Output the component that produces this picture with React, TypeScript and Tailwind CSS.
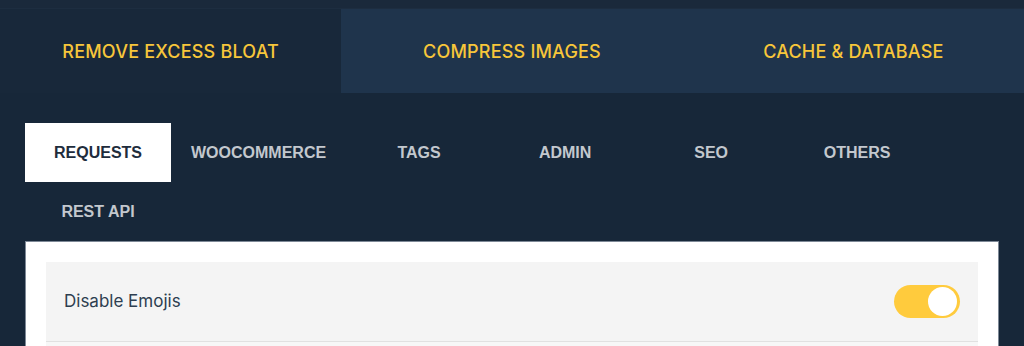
import { useState } from "react";

const mainTabs = ["Remove Excess Bloat", "Compress Images", "Cache & Database"];
const subTabs = ["Requests", "WooCommerce", "Tags", "Admin", "SEO", "Others", "REST API"];

export default function App()
{
    const [mainTab, setMainTab] = useState<number>(0);
    const [subTab, setSubTab] = useState<number>(0);
    const [emojis, setEmojis] = useState<boolean>(true);

    return (
        <div className="w-[1024px] h-[346px] overflow-hidden bg-[#172739] font-['Inter',sans-serif]">
            <div className="h-[9px] bg-[#1a293b] border-b border-[#1d2d40]"></div>
            <div className="grid grid-cols-3 h-[84px]">
                {mainTabs.map((tab, index) => (
                    <button
                        key={tab}
                        onClick={() => setMainTab(index)}
                        className={`flex items-center justify-center uppercase text-[18px] font-medium tracking-[0.2px] text-[#f7c63a] ${mainTab === index ? "bg-[#18283a]" : "bg-[#1f344c]"}`}
                    >
                        {tab}
                    </button>
                ))}
            </div>
            <div className="px-[25px] pt-[30px]">
                <div className="flex flex-wrap w-[974px]">
                    {subTabs.map((tab, index) => (
                        <button
                            key={tab}
                            onClick={() => setSubTab(index)}
                            className={`h-[59px] min-w-[146px] px-[20px] flex items-center justify-center uppercase text-[16px] font-bold font-['Liberation_Sans',sans-serif] ${subTab === index ? "bg-white text-[#1e2c3c]" : "text-[#c3c8ce]"}`}
                        >
                            {tab}
                        </button>
                    ))}
                </div>
                <div className="bg-white border border-[#7d8896] border-b-0 px-[20px] pt-[20px]">
                    <div className="flex items-center justify-between h-[80px] pl-[18px] pr-[18px] bg-[#f4f4f4] border-b border-[#e1e1e1]">
                        <span className="text-[17px] text-[#2d3e50]">Disable Emojis</span>
                        <button
                            onClick={() => setEmojis(!emojis)}
                            className={`w-[66px] h-[33px] rounded-full flex items-center px-[3px] ${emojis ? "bg-[#ffcb3d] justify-end" : "bg-[#ccc] justify-start"}`}
                        >
                            <span className="w-[29px] h-[29px] rounded-full bg-white"></span>
                        </button>
                    </div>
                    <div className="h-[40px] bg-[#f7f7f7]"></div>
                </div>
            </div>
        </div>
    );
}
